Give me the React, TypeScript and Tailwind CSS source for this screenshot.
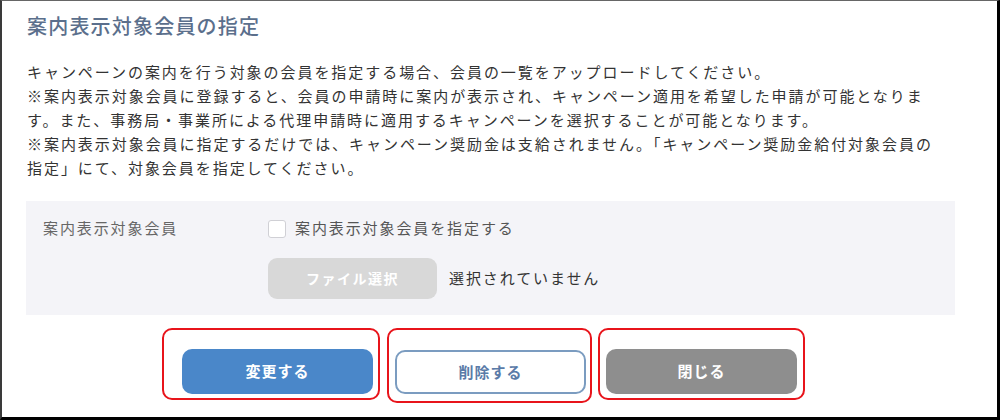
import React, { useState } from "react";

const jp = { fontFamily: '"Noto Sans CJK JP", "Noto Sans", sans-serif' };

const lines = [
  "キャンペーンの案内を行う対象の会員を指定する場合、会員の一覧をアップロードしてください。",
  "※案内表示対象会員に登録すると、会員の申請時に案内が表示され、キャンペーン適用を希望した申請が可能となりま",
  "す。また、事務局・事業所による代理申請時に適用するキャンペーンを選択することが可能となります。",
  "※案内表示対象会員に指定するだけでは、キャンペーン奨励金は支給されません。「キャンペーン奨励金給付対象会員の",
  "指定」にて、対象会員を指定してください。",
];

const App: React.FC = () => {
  const [checked, setChecked] = useState(false);

  return (
    <div
      style={jp}
      className="w-[1000px] h-[420px] bg-white border-t border-t-[#666] border-l-2 border-l-[#3a3a3a] border-r-[3px] border-r-black border-b-[3px] border-b-black pl-6 overflow-hidden"
    >
      <h1 className="mt-[11px] ml-[1px] text-[20px] leading-[28px] font-medium tracking-[1.2px] text-[#5b6f8c]">
        案内表示対象会員の指定
      </h1>

      <div className="mt-[20px] ml-[1px] text-[15px] leading-[24px] tracking-[1.95px] text-[#333]">
        {lines.map((l) => (
          <div key={l} className="whitespace-nowrap">
            {l}
          </div>
        ))}
      </div>

      <div className="mt-[21px] w-[929px] bg-[#f4f4f8] pl-[17px] pt-[18px] pb-[16px] text-[15px] tracking-[1.9px]">
        <div className="flex items-center h-[19px]">
          <div className="w-[225px] text-[#666]">案内表示対象会員</div>
          <label className="flex items-center gap-[9px] text-[#555] cursor-pointer">
            <input
              type="checkbox"
              checked={checked}
              onChange={(e) => setChecked(e.target.checked)}
              className="appearance-none w-[18px] h-[18px] bg-white border border-[#d0d0d5] rounded-[3px] checked:bg-[#4a87c9]"
            />
            案内表示対象会員を指定する
          </label>
        </div>
        <div className="flex items-center mt-[20px] ml-[225px]">
          <button className="w-[169px] h-[41px] rounded-[9px] bg-[#d8d8d8] text-white font-bold text-[14px] tracking-[1.5px]">
            ファイル選択
          </button>
          <span className="ml-[12px] text-[#333]">選択されていません</span>
        </div>
      </div>

      <div className="flex items-start mt-[13px] ml-[136px] gap-[7px] text-[15px] font-bold tracking-[1px]">
        <div className="border-2 border-[#e8141b] rounded-[10px] pl-[18px] pt-[19px] pr-[5px] pb-[4px]">
          <button className="w-[191px] h-[45px] rounded-[10px] bg-[#4a87c9] text-white">変更する</button>
        </div>
        <div className="border-2 border-[#e8141b] rounded-[10px] pl-[6px] pt-[20px] pr-[4px] pb-[7px]">
          <button className="w-[191px] h-[44px] rounded-[10px] bg-white border-2 border-[#7b9cc0] text-[#5a7ba8]">
            削除する
          </button>
        </div>
        <div className="ml-[-1px] border-2 border-[#e8141b] rounded-[10px] pl-[6px] pt-[19px] pr-[6px] pb-[4px]">
          <button className="w-[191px] h-[45px] rounded-[10px] bg-[#8e8e8e] text-white">閉じる</button>
        </div>
      </div>
    </div>
  );
};

export default App;
